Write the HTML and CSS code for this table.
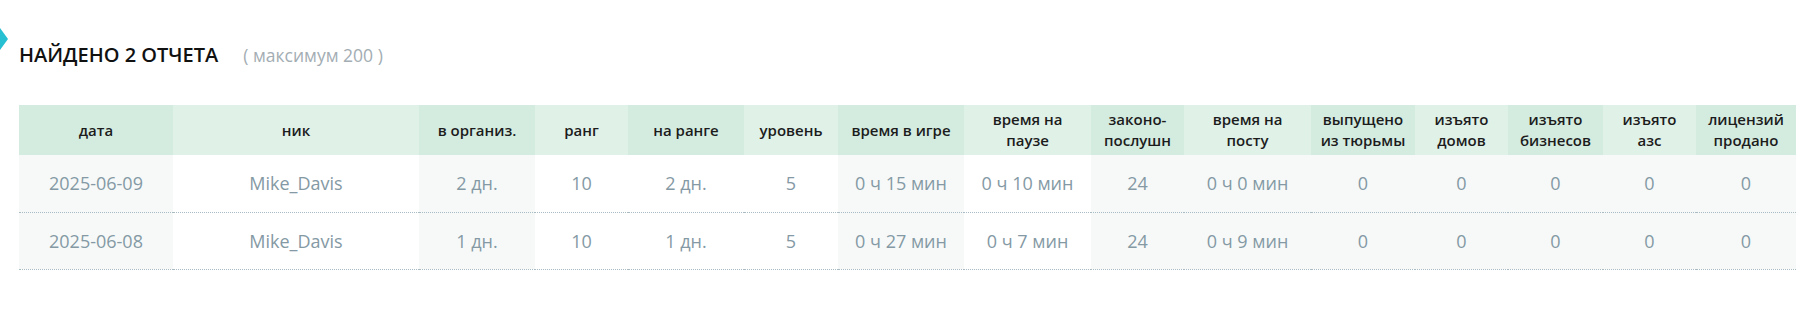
FILE: index.html
```html
<!DOCTYPE html>
<html lang="ru">
<head>
<meta charset="utf-8">
<title>Отчеты</title>
<link rel="stylesheet" href="styles.css">
</head>
<body>
<div class="page">
  <div class="heading">
    <span class="marker"></span>
    <h2 class="title">НАЙДЕНО 2 ОТЧЕТА</h2>
    <span class="limit">( максимум 200 )</span>
  </div>
  <table class="report">
    <colgroup>
      <col class="w-date"><col class="w-nick"><col class="w-org"><col class="w-rank"><col class="w-onrank"><col class="w-level"><col class="w-game"><col class="w-pause"><col class="w-law"><col class="w-post"><col class="w-jail"><col class="w-houses"><col class="w-biz"><col class="w-gas"><col class="w-lic">
    </colgroup>
    <thead>
      <tr>
        <th class="dk">дата</th>
        <th>ник</th>
        <th class="dk">в организ.</th>
        <th>ранг</th>
        <th class="dk">на ранге</th>
        <th>уровень</th>
        <th class="dk">время в игре</th>
        <th>время на<br>паузе</th>
        <th class="dk">законо-<br>послушн</th>
        <th>время на<br>посту</th>
        <th class="dk">выпущено<br>из тюрьмы</th>
        <th>изъято<br>домов</th>
        <th class="dk">изъято<br>бизнесов</th>
        <th>изъято<br>азс</th>
        <th class="dk">лицензий<br>продано</th>
      </tr>
    </thead>
    <tbody>
      <tr>
        <td class="sh">2025-06-09</td>
        <td>Mike_Davis</td>
        <td class="sh">2 дн.</td>
        <td>10</td>
        <td>2 дн.</td>
        <td>5</td>
        <td class="sh">0 ч 15 мин</td>
        <td>0 ч 10 мин</td>
        <td class="sh">24</td>
        <td class="sh">0 ч 0 мин</td>
        <td class="sh">0</td>
        <td class="sh">0</td>
        <td class="sh">0</td>
        <td class="sh">0</td>
        <td class="sh">0</td>
      </tr>
      <tr>
        <td class="sh">2025-06-08</td>
        <td>Mike_Davis</td>
        <td class="sh">1 дн.</td>
        <td>10</td>
        <td>1 дн.</td>
        <td>5</td>
        <td class="sh">0 ч 27 мин</td>
        <td>0 ч 7 мин</td>
        <td class="sh">24</td>
        <td class="sh">0 ч 9 мин</td>
        <td class="sh">0</td>
        <td class="sh">0</td>
        <td class="sh">0</td>
        <td class="sh">0</td>
        <td class="sh">0</td>
      </tr>
    </tbody>
  </table>
</div>
</body>
</html>
```
FILE: styles.css
```css
* { box-sizing: border-box; }
html, body { margin: 0; padding: 0; background: #fff; }
body { font-family: "Open Sans", "Noto Sans", sans-serif; }

.page { padding: 41px 12px 0 19px; }

.heading {
  position: relative;
  display: flex;
  align-items: baseline;
  gap: 25px;
  height: 27px;
  margin-bottom: 37px;
}
.marker {
  position: absolute;
  left: -19px;
  top: -13px;
  width: 8px;
  height: 22px;
  background: #27bfd2;
  clip-path: polygon(0 0, 100% 50%, 0 100%);
}
.title {
  margin: 0;
  font-size: 20px;
  line-height: 27px;
  font-weight: 600;
  color: #111;
  letter-spacing: 0;
}
.limit {
  font-size: 17.5px;
  color: #a3adb3;
}

.report {
  width: 1777px;
  border-collapse: collapse;
  table-layout: fixed;
}
.w-date { width: 154px; }
.w-nick { width: 246px; }
.w-org { width: 116px; }
.w-rank { width: 93px; }
.w-onrank { width: 116px; }
.w-level { width: 94px; }
.w-game { width: 126px; }
.w-pause { width: 127px; }
.w-law { width: 93px; }
.w-post { width: 127px; }
.w-jail { width: 104px; }
.w-houses { width: 93px; }
.w-biz { width: 95px; }
.w-gas { width: 93px; }
.w-lic { width: 100px; }

.report th {
  height: 50px;
  padding: 0 4px;
  background: #e0f1e8;
  color: #1c1c1c;
  font-size: 15px;
  line-height: 21px;
  font-weight: 600;
  text-align: center;
  vertical-align: middle;
}
.report th.dk { background: #d4ece0; }

.report td {
  height: 57px;
  padding: 0 4px;
  border-bottom: 1px dotted #a9bcc4;
  color: #8499a4;
  font-size: 18px;
  font-weight: 400;
  text-align: center;
  vertical-align: middle;
  background: #fff;
}
.report td.sh { background: #f7f9f9; }
```
